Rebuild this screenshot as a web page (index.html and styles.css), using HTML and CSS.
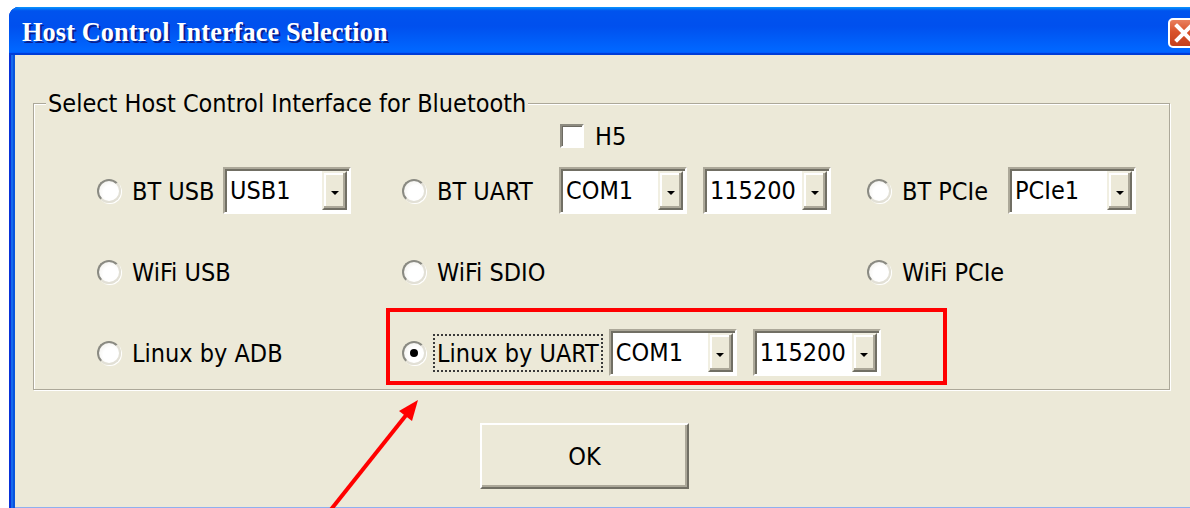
FILE: index.html
```html
<!DOCTYPE html>
<html lang="en">
<head>
<meta charset="utf-8">
<title>Host Control Interface Selection</title>
<link rel="stylesheet" href="styles.css">
</head>
<body>
<div class="window">
  <div class="titlebar">
    <span class="title">Host Control Interface Selection</span>
    <span class="close-btn">
      <svg width="28" height="26" viewBox="0 0 28 26"><path d="M7 6 L21 20 M21 6 L7 20" stroke="#fff" stroke-width="4" stroke-linecap="square"/></svg>
    </span>
  </div>
  <div class="client">
    <fieldset class="group">
      <legend>Select Host Control Interface for Bluetooth</legend>
      <div class="group-body">
        <div class="check-line"><span class="checkbox"></span><span class="text">H5</span></div>
        <div class="options">
          <div class="cell">
            <span class="opt w-col1"><span class="radio"></span><span class="text">BT USB</span></span>
            <span class="combo"><span class="value">USB1</span><span class="drop"></span></span>
          </div>
          <div class="cell">
            <span class="opt w-col2"><span class="radio"></span><span class="text">BT UART</span></span>
            <span class="combo"><span class="value">COM1</span><span class="drop"></span></span>
            <span class="combo next"><span class="value">115200</span><span class="drop"></span></span>
          </div>
          <div class="cell">
            <span class="opt w-col3"><span class="radio"></span><span class="text">BT PCIe</span></span>
            <span class="combo"><span class="value">PCIe1</span><span class="drop"></span></span>
          </div>

          <div class="cell">
            <span class="opt"><span class="radio"></span><span class="text">WiFi USB</span></span>
          </div>
          <div class="cell">
            <span class="opt"><span class="radio"></span><span class="text">WiFi SDIO</span></span>
          </div>
          <div class="cell">
            <span class="opt"><span class="radio"></span><span class="text">WiFi PCIe</span></span>
          </div>

          <div class="cell">
            <span class="opt"><span class="radio"></span><span class="text">Linux by ADB</span></span>
          </div>
          <div class="cell">
            <span class="opt"><span class="radio on"></span><span class="text focus">Linux by UART</span></span>
            <span class="combo after-focus"><span class="value">COM1</span><span class="drop"></span></span>
            <span class="combo next"><span class="value">115200</span><span class="drop"></span></span>
          </div>
          <div class="cell"></div>
        </div>
      </div>
    </fieldset>
    <div class="actions">
      <button class="btn" type="button">OK</button>
    </div>
  </div>
</div>

<svg class="markup" width="1190" height="508" viewBox="0 0 1190 508">
  <rect x="388" y="310" width="557" height="73" fill="none" stroke="#ff0000" stroke-width="4"/>
  <line x1="329" y1="512" x2="407" y2="414" stroke="#ff0000" stroke-width="4"/>
  <polygon points="418,400 412,421 399,411" fill="#ff0000"/>
</svg>
</body>
</html>
```
FILE: styles.css
```css
html, body {
  margin: 0;
}

body {
  box-sizing: border-box;
  width: 1190px;
  height: 508px;
  padding: 7px 0 0 9px;
  overflow: hidden;
  position: relative;
  background: #ffffff;
  color: #000;
  font-family: "DejaVu Sans Condensed", "DejaVu Sans", sans-serif;
  font-stretch: condensed;
  font-size: 25px;
}

/* window frame */
.window {
  width: 1213px;
  padding-bottom: 6px;
  background: #0855dd;
  border-radius: 10px 10px 0 0;
  box-shadow:
    inset 2px 0 #0831d9,
    inset 4px 0 #166aee,
    inset -2px -2px #00138c,
    inset -4px -4px #001ea0;
}

.titlebar {
  height: 48px;
  box-sizing: border-box;
  padding: 4px 22px 0 13px;
  display: flex;
  align-items: center;
  border-radius: 10px 10px 0 0;
  background: linear-gradient(180deg, #0997ff, #0053ee 8%, #0050ee 40%, #0066ff 88%, #0066ff 93%, #005bff 95%, #003dd7 96%, #003dd7);
}

.title {
  flex: 1;
  font-family: "Liberation Serif", serif;
  font-weight: bold;
  font-size: 26.3px;
  letter-spacing: 0.1px;
  color: #fff;
  text-shadow: 2px 2px 0 #0a1f8f;
  white-space: nowrap;
}

.close-btn {
  flex: none;
  width: 32px;
  height: 30px;
  box-sizing: border-box;
  border: 2px solid #fff;
  border-radius: 5px;
  background: linear-gradient(180deg, #e9805f, #d9532b 45%, #c43f1c);
  display: flex;
}

.client {
  display: flow-root;
  margin: 0 6px;
  height: 452px;
  background: #ece9d8;
  border-bottom: 1px solid #8fb0ef;
}

/* group box */
.group {
  margin: 33px 0 0 18px;
  width: 1137px;
  box-sizing: border-box;
  min-width: 0;
  padding: 5px 0 13px 12px;
  border: 1px solid #aca899;
  box-shadow: inset 1px 1px 0 #fff, 1px 1px 0 #fff;
}

.group legend {
  padding: 2px 2px 0;
  line-height: 28px;
  background: #ece9d8;
}

.group-body {
  padding-left: 51px;
}

.check-line {
  height: 26px;
  margin: 0 0 18px 463px;
  display: flex;
  align-items: center;
  gap: 7px;
}

.checkbox {
  flex: none;
  width: 20px;
  height: 20px;
  border: 2px solid;
  border-color: #8d8b80 #fff #fff #8d8b80;
  box-shadow: inset 1px 1px 0 #6d6b62;
  background: #fff;
}

.options {
  display: grid;
  grid-template-columns: 305px 465px 1fr;
  grid-auto-rows: 47px;
  row-gap: 34px;
}

.cell {
  display: flex;
  align-items: center;
}

.opt {
  flex: none;
  display: flex;
  align-items: center;
  gap: 7px;
}

.w-col1 { width: 126px; }
.w-col2 { width: 157px; }
.w-col3 { width: 141px; }

.text {
  line-height: 30px;
  padding: 3px 2px 1px;
  border: 2px dotted transparent;
  white-space: nowrap;
}

.text.focus {
  border-color: #3a3a3a;
}

.radio {
  flex: none;
  position: relative;
  width: 20px;
  height: 20px;
  border: 2px solid;
  border-color: #8a8a82 #e2e0d6 #e2e0d6 #8a8a82;
  border-radius: 50%;
  background: radial-gradient(circle at 60% 60%, #ffffff 45%, #ecebe4 100%);
  box-shadow: 1px 1px 0 #fff;
}

.radio.on::after {
  content: "";
  position: absolute;
  left: 6px;
  top: 6px;
  width: 8px;
  height: 8px;
  border-radius: 50%;
  background: #000;
}

/* drop-down list */
.combo {
  flex: none;
  width: 128px;
  height: 47px;
  box-sizing: border-box;
  display: flex;
  padding: 2px;
  border: 2px solid;
  border-color: #aca899 #fff #fff #aca899;
  box-shadow: inset 2px 2px #716f64;
  background: #fff;
}

.combo.next { margin-left: 16px; }
.combo.after-focus { margin-left: 6px; }

.combo .value {
  flex: 1;
  padding: 1px 0 0 3px;
  line-height: 38px;
  white-space: nowrap;
}

.drop {
  flex: none;
  width: 25px;
  box-sizing: border-box;
  border: 2px solid;
  border-color: #f1efe2 #716f64 #716f64 #f1efe2;
  box-shadow: inset -2px -2px #aca899, inset 2px 2px #fff;
  background: #ece9d8;
  display: flex;
  align-items: center;
  justify-content: center;
}

.drop::after {
  content: "";
  margin-top: 4px;
  border-left: 4px solid transparent;
  border-right: 4px solid transparent;
  border-top: 4px solid #000;
}

/* buttons */
.actions {
  padding: 33px 0 0 465px;
}

.btn {
  width: 209px;
  height: 66px;
  padding: 0;
  font: inherit;
  color: #000;
  background: #ece9d8;
  border: 2px solid;
  border-color: #fff #716f64 #716f64 #fff;
  box-shadow: inset -2px -2px #aca899;
}

/* red call-out drawn on top */
.markup {
  position: absolute;
  left: 0;
  top: 0;
  pointer-events: none;
}
```
